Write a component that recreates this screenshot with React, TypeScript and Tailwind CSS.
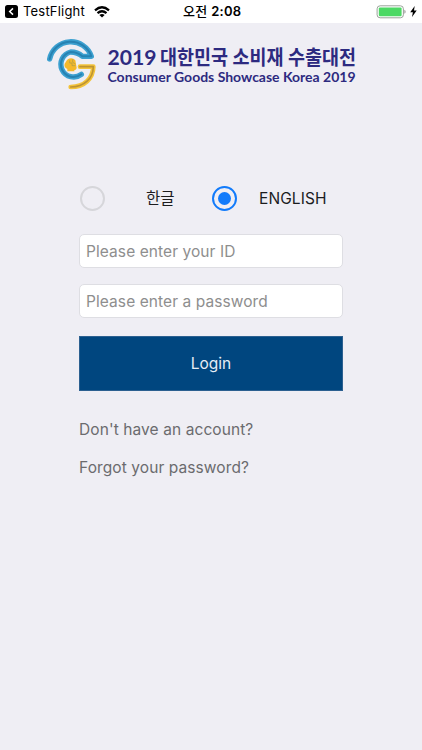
import React, { useState } from "react";

function StatusBar() {
  return (
    <header className="flex h-[23px] items-center bg-white text-[13px] leading-[23px] text-black">
      <div className="flex w-[180px] items-center pl-[5px]">
        <svg width="13" height="13" viewBox="0 0 13 13">
          <rect width="13" height="13" rx="2.5" fill="#000" />
          <path d="M8 3.4 4.7 6.5 8 9.6" fill="none" stroke="#fff" strokeWidth="1.5" />
        </svg>
        <span className="ml-[5px] w-[62px] whitespace-nowrap tracking-[0.2px]">TestFlight</span>
        <svg className="ml-[9px]" width="16" height="12" viewBox="0 0 16 12" fill="none" stroke="#000" strokeWidth="2.2">
          <path d="M1 4.4Q8-1.9 15 4.4" />
          <path d="M3.5 7.2Q8 3.3 12.5 7.2" />
          <path d="M8 11.5 5.4 8.9Q8 7 10.6 8.9Z" fill="#000" stroke="none" />
        </svg>
      </div>
      <span className="w-[64px] whitespace-nowrap pl-[3px] font-medium tracking-[0.25px]">
        오전 <span className="font-semibold">2:08</span>
      </span>
      <div className="ml-auto flex items-center gap-[4px] pr-[5px]">
        <svg width="30" height="14" viewBox="0 0 30 14">
          <rect x="1.1" y=".8" width="26.3" height="12" rx="3" fill="#fff" stroke="#9aa39a" />
          <rect x="2.8" y="2.4" width="22.8" height="8.8" rx="1.2" fill="#4cd964" />
          <path d="M28.4 4.8q1.2.4 1.2 2t-1.2 2z" fill="#999" />
        </svg>
        <svg width="7" height="11" viewBox="0 0 7 11">
          <path d="M4.7 0 .2 6.2h2.7L2 11l4.7-6.4H4z" fill="#000" />
        </svg>
      </div>
    </header>
  );
}

const blueArc = "M29 75A65 65 0 0 1 154 67H127C116 57 105 54 92 54A38 38 0 1 0 124 121";
const goldArc = "M120 98H160C159 133 134 159 92 159";

function Logo() {
  return (
    <div className="flex h-[60px] pl-[40px]">
      <svg className="shrink-0" width="64" height="60" viewBox="0 0 192 180" fill="none" strokeLinecap="round" strokeLinejoin="round">
        <path d={blueArc} stroke="#3ca0d0" strokeWidth="16" />
        <path d={goldArc} stroke="#f3c33a" strokeWidth="14" />
        <path d={blueArc} stroke="#2782b2" strokeWidth="6" />
        <path d={goldArc} stroke="#bd9433" strokeWidth="5" />
        <path d="M82 112V105C71 101 72 90 77 85C81 72 98 68 106 79L110 101C110 106 106 108 103 108V112Z" fill="#f5b92b" />
        <path d="M89 80v7h7v8h9M98 77v8l7 4" stroke="#a39a50" strokeWidth="2" />
      </svg>
      <svg className="shrink-0 overflow-visible" width="260" height="60" viewBox="0 0 260 60" fill="#2d2a80">
        <g className="font-['Lato','Noto_Sans_CJK_KR',sans-serif] font-bold">
          <text x="3.5" y="30.5" fontSize="21.5" textLength="49" lengthAdjust="spacingAndGlyphs">2019</text>
          <text x="56" y="30.7" fontSize="20" textLength="196" lengthAdjust="spacingAndGlyphs">대한민국 소비재 수출대전</text>
          <text x="3.5" y="47.6" fontSize="14" textLength="248" lengthAdjust="spacingAndGlyphs">Consumer Goods Showcase Korea 2019</text>
        </g>
      </svg>
    </div>
  );
}

function Radio({ checked, onSelect }: { checked: boolean; onSelect: () => void }) {
  return (
    <button
      role="radio"
      aria-checked={checked}
      onClick={onSelect}
      className={
        checked
          ? "flex size-[25px] items-center justify-center rounded-full border-2 border-[#127bfb]"
          : "flex size-[25px] items-center justify-center rounded-full border-2 border-[#d6d6da]"
      }
    >
      {checked && <span className="size-[13px] rounded-full bg-[#127bfb]" />}
    </button>
  );
}

const inputClass =
  "h-[34px] w-full rounded-[5px] border border-[#dedee3] bg-white px-[6px] text-[15.5px] tracking-[0.08px] text-black outline-none placeholder:text-[#8e8e8e]";

export default function App() {
  const [language, setLanguage] = useState("en");
  return (
    <div className="h-[750px] w-[422px] overflow-hidden bg-[#efeef4] font-['Inter','Noto_Sans_CJK_KR',sans-serif]">
      <StatusBar />
      <main className="pt-[11px]">
        <Logo />
        <div className="ml-[79px] mt-[92px] w-[264px]">
          <div className="flex h-[25px] items-center pl-[1px] text-[15.5px] text-[#1c1c1e]">
            <Radio checked={language === "ko"} onSelect={() => setLanguage("ko")} />
            <span className="ml-[41px] w-[66px] whitespace-nowrap">한글</span>
            <Radio checked={language === "en"} onSelect={() => setLanguage("en")} />
            <span className="ml-[22px] whitespace-nowrap tracking-[0.1px]">ENGLISH</span>
          </div>
          <form className="mt-[23px] flex flex-col" onSubmit={(e) => e.preventDefault()}>
            <input className={inputClass} placeholder="Please enter your ID" />
            <input className={`mt-[16px] ${inputClass}`} type="password" placeholder="Please enter a password" />
            <button className="mt-[18px] h-[55px] w-full border border-[#2c6090] bg-[#00467f] text-[15.5px] text-[#e6edf5]">Login</button>
          </form>
          <div className="mt-[29px] flex flex-col gap-[18px] text-[15.5px] leading-[20px] tracking-[0.09px] text-[#6b6b6e]">
            <a className="whitespace-nowrap">Don't have an account?</a>
            <a className="whitespace-nowrap">Forgot your password?</a>
          </div>
        </div>
      </main>
    </div>
  );
}
